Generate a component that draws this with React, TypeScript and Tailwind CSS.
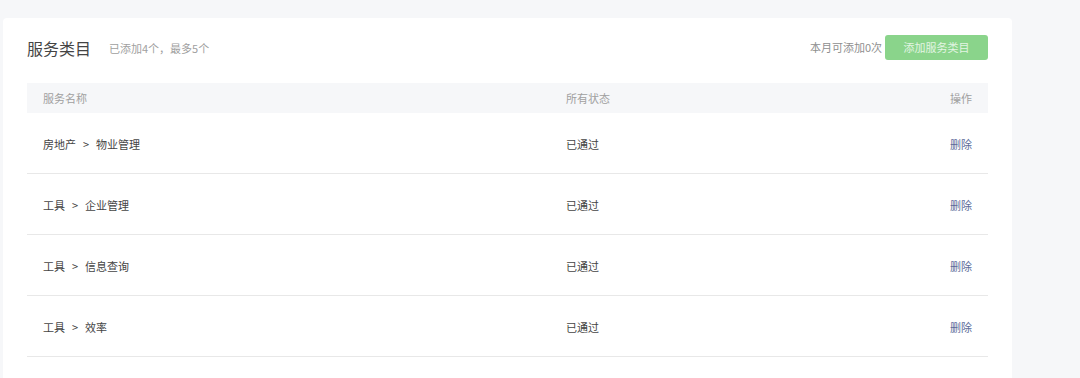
const rows = [
  { a: "房地产", b: "物业管理", status: "已通过" },
  { a: "工具", b: "企业管理", status: "已通过" },
  { a: "工具", b: "信息查询", status: "已通过" },
  { a: "工具", b: "效率", status: "已通过" },
];

export default function App() {
  return (
    <div
      className="h-[378px] w-[1080px] overflow-hidden bg-[#f6f7f9] pl-[3px] pt-[18px]"
      style={{ fontFamily: '"Noto Sans CJK SC", "Noto Sans", sans-serif' }}
    >
      <div className="h-[400px] w-[1009px] rounded-[4px] bg-white px-6 pt-[17px]">
        <div className="flex h-[25px] items-center justify-between">
          <div className="flex items-center">
            <h1 className="text-[16px] leading-none text-[#444]">服务类目</h1>
            <span className="ml-[18px] mt-[2px] text-[11px] text-[#a0a0a0]">已添加4个，最多5个</span>
          </div>
          <div className="flex items-center">
            <span className="mr-[3px] text-[11px] text-[#8f8f8f]">本月可添加0次</span>
            <button className="h-[25px] w-[103px] rounded-[3px] bg-[#8ad48b] text-[11px] text-[#e3f5e3]">
              添加服务类目
            </button>
          </div>
        </div>

        <div className="mt-[23px]">
          <div className="flex h-[30px] items-center bg-[#f6f7f9] px-4 text-[11px] text-[#a0a0a0]">
            <div className="w-[523px]">服务名称</div>
            <div className="flex-1">所有状态</div>
            <div>操作</div>
          </div>
          {rows.map((r) => (
            <div
              key={r.b}
              className="flex h-[61px] items-center border-b border-[#e8e8e8] px-4 pt-[2px] text-[11px] text-[#444]"
            >
              <div className="w-[523px]">
                {r.a}
                <span className="mx-[7px]">&gt;</span>
                {r.b}
              </div>
              <div className="flex-1">{r.status}</div>
              <div className="text-[#5b6b98]">删除</div>
            </div>
          ))}
        </div>
      </div>
    </div>
  );
}
